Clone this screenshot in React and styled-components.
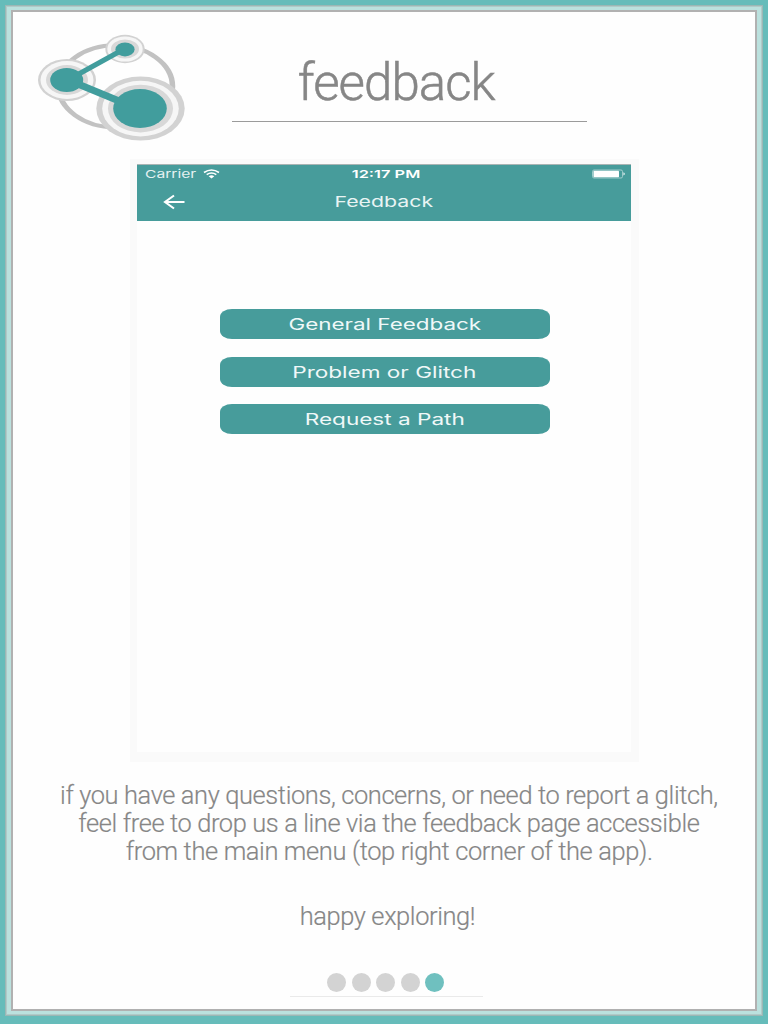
import React from "react";
import styled, { createGlobalStyle } from "styled-components";

const GlobalStyle = createGlobalStyle`
  *, *::before, *::after { box-sizing: border-box; }
  html, body { margin: 0; background: #66bcba; }
  body { overflow: hidden; }
`;

const Frame = styled.div`
  width: 768px;
  height: 1022px;
  padding: 5px 5px 6px 5px;
  background: #66bcba;
`;

const Bezel = styled.div`
  height: 100%;
  border: 1px solid #9cb7b5;
  background: #bbe1de;
  box-shadow: inset 0 0 0 1px #b0cac8;
  padding: 4px 5px 4px 5px;
`;

const Page = styled.main`
  height: 100%;
  border: 2px solid #b1b1b1;
  background: #fefefe;
  display: flex;
  flex-direction: column;
  align-items: center;
`;

const Header = styled.header`
  width: 100%;
  height: 147px;
  display: flex;
  align-items: flex-start;
`;

const Logo = styled.svg`
  display: block;
  width: 160px;
  height: 120px;
  margin: 18px 0 0 17px;
  flex: none;
`;

const TitleBlock = styled.div`
  width: 355px;
  height: 110px;
  margin-left: 42px;
  border-bottom: 1px solid #9b9b9b;
  display: flex;
  justify-content: center;
  padding-top: 40px;
`;

const Stretch = styled.span`
  display: inline-block;
  white-space: nowrap;
  transform: scaleX(${(p) => p.$x});
  transform-origin: ${(p) => p.$origin || "center"};
`;

const Title = styled.h1`
  margin: 0 26px 0 0;
  font: 300 52px/62px Roboto, sans-serif;
  letter-spacing: -1px;
  -webkit-text-stroke: 0.5px #868686;
  color: #868686;
`;

const Device = styled.section`
  width: 509px;
  height: 603px;
  background: #fafafa;
  padding: 5px 8px 10px 7px;
  flex: none;
`;

const Screen = styled.div`
  height: 100%;
  background: #fefefe;
  font-family: Inter, "Liberation Sans", sans-serif;
  color: #fff;
`;

const NavBar = styled.div`
  height: 57px;
  background: #479c9b;
  border-top: 1px solid #a9b4b4;
`;

const Status = styled.div`
  height: 18px;
  display: grid;
  grid-template-columns: 1fr auto 1fr;
  align-items: center;
  padding: 0 5px 0 8px;
  font-size: 11px;
  line-height: 18px;
`;

const Carrier = styled.div`
  display: flex;
  align-items: center;
`;

const CarrierName = styled.div`
  width: 58px;
  color: #e4f1f1;
`;

const Clock = styled.div`
  padding-left: 3px;
  font-weight: 600;
`;

const Battery = styled.svg`
  justify-self: end;
`;

const NavRow = styled.div`
  height: 38px;
  display: grid;
  grid-template-columns: 1fr auto 1fr;
  align-items: center;
  padding-left: 26px;
  padding-right: 26px;
`;

const NavTitle = styled.div`
  font-size: 15px;
  line-height: 18px;
  color: #e9f4f4;
`;

const Actions = styled.div`
  display: flex;
  flex-direction: column;
  align-items: center;
  gap: 17.5px;
  padding: 88px 0 0 2px;
`;

const Action = styled.button`
  width: 330px;
  height: 30px;
  border: 0;
  padding: 0;
  border-radius: 12px / 8px;
  background: #479c9b;
  color: #f0f8f8;
  font: 400 16px/30px Inter, "Liberation Sans", sans-serif;
`;

const Copy = styled.div`
  margin: 19px 0 0 10px;
  text-align: center;
  font: 300 26.5px/28px Roboto, sans-serif;
  letter-spacing: -0.4px;
  -webkit-text-stroke: 0.2px #868686;
  color: #868686;
`;

const Line = styled.div`
  height: 28px;
`;

const Closing = styled(Copy)`
  margin: 37px 0 0 7px;
`;

const Pager = styled.nav`
  width: 193px;
  height: 24px;
  margin: 43px 0 0 5px;
  border-bottom: 1px solid #eaeaea;
  display: flex;
  justify-content: center;
  gap: 5.5px;
  padding-right: 2px;
`;

const Dot = styled.span`
  width: 19px;
  height: 19px;
  border-radius: 50%;
  background: ${(p) => (p.$active ? "#6fc0bf" : "#d3d3d3")};
`;

const lines = [
  ["if you have any questions, concerns, or need to report a glitch,", 0.959],
  ["feel free to drop us a line via the feedback page accessible", 0.959],
  ["from the main menu (top right corner of the app).", 0.961],
];

const actions = [
  ["General Feedback", 1.4],
  ["Problem or Glitch", 1.41],
  ["Request a Path", 1.41],
];

function Brand() {
  return (
    <Logo viewBox="30 30 160 120" aria-hidden="true">
      <g transform="translate(115.500 86.3) scale(1.39 1)">
        <circle r="41" fill="none" stroke="#c2c2c2" strokeWidth="4" />
      </g>
      <ellipse cx="125" cy="49" rx="19.7" ry="14.2" fill="#d2d2d2" />
      <ellipse cx="125" cy="49" rx="17.7" ry="12.6" fill="#f6f6f6" />
      <ellipse cx="125" cy="49" rx="14" ry="9.6" fill="#d8d8d8" />
      <ellipse cx="67" cy="80" rx="29" ry="21" fill="#d2d2d2" />
      <ellipse cx="67" cy="80" rx="26.5" ry="18.9" fill="#f6f6f6" />
      <ellipse cx="67" cy="80" rx="21" ry="15" fill="#d8d8d8" />
      <ellipse cx="140.5" cy="108.6" rx="44.2" ry="32" fill="#d2d2d2" />
      <ellipse cx="140.5" cy="108.6" rx="38.3" ry="27.8" fill="#f6f6f6" />
      <ellipse cx="140.5" cy="108.6" rx="32.5" ry="23.8" fill="#d8d8d8" />
      <path d="M67 80.500L125 48.500" stroke="#419d9d" strokeWidth="5" />
      <path d="M67 79.500L130 105.500" stroke="#419d9d" strokeWidth="7" />
      <g fill="#419d9d">
        <ellipse cx="125" cy="49.400" rx="9.600" ry="7" />
        <ellipse cx="66.700" cy="80" rx="16.500" ry="12" />
        <ellipse cx="140" cy="108.500" rx="26.800" ry="19.500" />
      </g>
    </Logo>
  );
}

export default function App() {
  return (
    <>
      <GlobalStyle />
      <Frame>
        <Bezel>
          <Page>
            <Header>
              <Brand />
              <TitleBlock>
                <Title><Stretch $x={0.982}>feedback</Stretch></Title>
              </TitleBlock>
            </Header>
            <Device>
              <Screen>
                <NavBar>
                  <Status>
                    <Carrier>
                      <CarrierName><Stretch $x={1.42} $origin="left">Carrier</Stretch></CarrierName>
                      <svg width="17" height="10" viewBox="0 0 17 10" fill="none" stroke="#fff">
                        <path d="M1 3.500Q8.500-1.500 16 3.500" strokeWidth="1.700" />
                        <path d="M3.700 5.700Q8.500 2.400 13.300 5.700" strokeWidth="1.600" />
                        <path d="M5.700 7.200Q8.500 5.200 11.300 7.200L8.500 9.400Z" fill="#fff" stroke="none" />
                      </svg>
                    </Carrier>
                    <Clock><Stretch $x={1.49}>12:17 PM</Stretch></Clock>
                    <Battery width="34" height="10" viewBox="0 0 34 10">
                      <rect x=".5" y="1" width="30" height="8" rx="1.500" fill="none" stroke="#b5d7d7" strokeWidth=".8" />
                      <rect x="1.500" y="1.800" width="25.500" height="6.500" rx=".7" fill="#fff" />
                      <path d="M31.500 3.300Q34 5 31.500 6.600Z" fill="#fff" />
                    </Battery>
                  </Status>
                  <NavRow>
                    <svg width="23" height="16" viewBox="0 0 23 16" fill="none" stroke="#fff" strokeWidth="2.100">
                      <path d="M1.500 8H21.500M11 1.500L2 8L11 14.500" />
                    </svg>
                    <NavTitle><Stretch $x={1.42}>Feedback</Stretch></NavTitle>
                  </NavRow>
                </NavBar>
                <Actions>
                  {actions.map(([label, x]) => (
                    <Action key={label}><Stretch $x={x}>{label}</Stretch></Action>
                  ))}
                </Actions>
              </Screen>
            </Device>
            <Copy>
              {lines.map(([text, x]) => (
                <Line key={text}><Stretch $x={x}>{text}</Stretch></Line>
              ))}
            </Copy>
            <Closing><Stretch $x={0.959}>happy exploring!</Stretch></Closing>
            <Pager>
              <Dot /><Dot /><Dot /><Dot /><Dot $active />
            </Pager>
          </Page>
        </Bezel>
      </Frame>
    </>
  );
}
